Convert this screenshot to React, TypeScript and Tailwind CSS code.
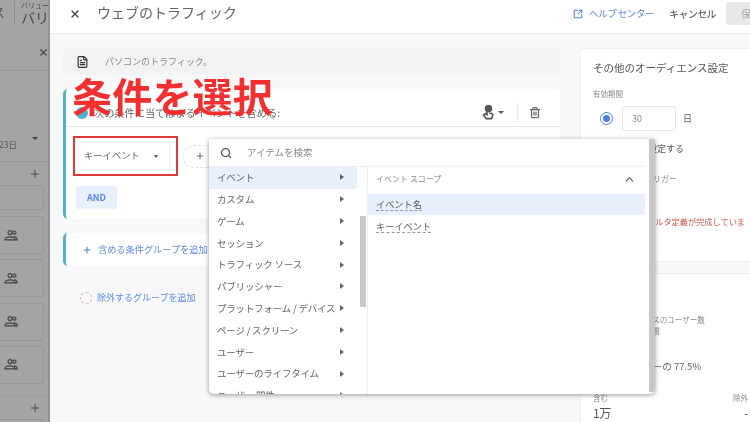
import React from 'react';
import { X, FileText, Plus, Search, SquareArrowOutUpRight, Trash2, ChevronUp } from 'lucide-react';

const cats = [
  'イベント',
  'カスタム',
  'ゲーム',
  'セッション',
  'トラフィック ソース',
  'パブリッシャー',
  'プラットフォーム / デバイス',
  'ページ / スクリーン',
  'ユーザー',
  'ユーザーのライフタイム',
  'ユーザー 関性',
];

const PeopleIcon = () => (
  <svg viewBox="0 0 14 11" className="w-[14px] h-[11px]" fill="none" stroke="#444" strokeWidth="1.2">
    <circle cx="6" cy="2.6" r="2" />
    <circle cx="10.4" cy="2.6" r="1.6" />
    <path d="M1 9.8c0-2 2.4-3 5-3s5 1 5 3z" />
    <path d="M10 6.8c1.6 0 3.2.8 3.2 3H11" />
  </svg>
);

const HandIcon = () => (
  <svg viewBox="0 0 12 15" className="w-[12px] h-[15px]" fill="none" stroke="#555" strokeWidth="1.6">
    <circle cx="6.5" cy="3.6" r="3" fill="#555" />
    <path d="M5 5.5v4.3L3.2 8.6 1.6 10l2.6 3.6h5.4l1.2-3.4c.2-.8-.2-1.4-1-1.6L7.4 8" />
  </svg>
);

const Sidebar = () => (
  <div className="w-[50px] shrink-0 h-full bg-[#a4a4a4] flex flex-col text-[#4a4a4a] overflow-hidden border-r-2 border-[#939393]">
    <div className="h-[35px] shrink-0 flex items-start pt-[1px] overflow-hidden whitespace-nowrap">
      <span className="ml-[-8px] w-[12px] text-[13px] leading-[22px] text-[#555]">ス</span>
      <div className="ml-[10px] border-l border-[#8d8d8d] pl-[6px] h-[24px]">
        <div className="text-[7px] leading-[9px]">バリュー</div>
        <div className="text-[14px] leading-[15px]">バリ</div>
      </div>
    </div>
    <div className="h-[36px] shrink-0 border-b border-[#979797] flex justify-end items-center">
      <X className="w-[11px] h-[11px] translate-x-[1px]" strokeWidth={2.5} />
    </div>
    <div className="h-[91px] shrink-0 border-b border-[#979797] flex items-end pb-[13px] text-[8.5px] leading-none text-[#555]">
      <span className="ml-[-1px]">23日</span>
      <span className="ml-[15px] mb-[8px] w-0 h-0 border-x-[3px] border-x-transparent border-t-[3px] border-t-[#444]" />
    </div>
    <div className="h-[23px] shrink-0 flex justify-end items-center pr-[7px]">
      <Plus className="w-[12px] h-[12px]" />
    </div>
    <div className="h-[25px] shrink-0 border border-[#979797] rounded-r-[3px] mr-[4px] ml-[-4px] mb-[6px]" />
    {[0, 1, 2, 3].map((i) => (
      <div key={i} className="h-[38px] shrink-0 border border-[#979797] rounded-r-[3px] mr-[4px] ml-[-4px] mb-[5.3px] flex items-center pl-[7px]">
        <PeopleIcon />
      </div>
    ))}
    <div className="mt-[7px] border-t border-[#9c9c9c] h-[23px] shrink-0 flex justify-end items-center pr-[7px]">
      <Plus className="w-[12px] h-[12px]" />
    </div>
    <div className="h-[10px] shrink-0 border border-[#979797] rounded-r-[3px] mr-[4px] ml-[-4px]" />
  </div>
);

const Header = () => (
  <div className="h-[34px] shrink-0 bg-white border-b border-[#e8eaed] flex items-center pl-[19px] pb-[6px] text-[#3c4043]">
    <X className="w-[12px] h-[12px]" strokeWidth={2.5} />
    <span className="ml-[16px] mb-[3px] text-[14px] leading-none text-[#5f6368]">ウェブのトラフィック</span>
    <div className="ml-auto flex items-center">
      <SquareArrowOutUpRight className="w-[10px] h-[10px] text-[#4d7fe0]" strokeWidth={2.5} />
      <span className="ml-[6px] text-[9.6px] tracking-[-0.55px] text-[#5b88e6]">ヘルプ センター</span>
      <span className="ml-[15px] text-[10px] tracking-[-0.6px] text-[#444]">キャンセル</span>
      <div className="ml-[10px] w-[24px] h-[23px] bg-[#e8e8e8] rounded-l-[3px] pl-[15px] text-[10px] leading-[23px] text-[#aaa] overflow-hidden whitespace-nowrap">保存</div>
    </div>
  </div>
);

const LeftPane = () => (
  <div className="w-[497px] shrink-0 flex flex-col">
    <div className="h-[27px] bg-[#f1f3f4] rounded-[5px] flex items-center pl-[13px]">
      <FileText className="w-[13px] h-[14px] text-[#333]" strokeWidth={2.2} />
      <span className="ml-[16px] text-[9px] text-[#888]">パソコンのトラフィック。</span>
    </div>
    <div className="mt-[14px] h-[130px] bg-white rounded-[5px] border-l-[3px] border-[#4fb3c9] flex flex-col">
      <div className="h-[38px] shrink-0 border-b border-[#e8eaed] flex items-center pt-[10px] pl-[10px]">
        <span className="w-[12px] h-[12px] rounded-full bg-[#4fb3c9]" />
        <span className="ml-[6px] text-[10.2px] text-[#666] whitespace-nowrap">次の条件に当てはまるイベントを含める:</span>
        <div className="ml-auto flex items-center pr-[19px] text-[#555]">
          <HandIcon />
          <span className="ml-[4px] w-0 h-0 border-x-[3px] border-x-transparent border-t-[3px] border-t-[#555]" />
          <span className="ml-[13px] mr-[11px] w-px h-[19px] bg-[#e8eaed]" />
          <Trash2 className="w-[12px] h-[13px] text-[#666]" strokeWidth={2.5} />
        </div>
      </div>
      <div className="flex items-center mt-[9px] ml-[7px]">
        <div className="w-[105px] h-[40px] border-2 border-[#e53935] flex items-center pl-[9px] text-[9.3px] text-[#666]">
          <span>キーイベント</span>
          <span className="ml-[14px] w-0 h-0 border-x-[2.5px] border-x-transparent border-t-[3px] border-t-[#555]" />
          <span className="ml-[11px] w-px h-[26px] bg-[#e8eaed]" />
        </div>
        <div className="ml-[5px] w-[40px] h-[23px] border border-dashed border-[#dfe1e5] rounded-[10px] pl-[11px] flex items-center text-[#555]">
          <Plus className="w-[10px] h-[10px]" />
        </div>
      </div>
      <div className="mt-[10px] ml-[10px] w-[41px] h-[23px] rounded-[3px] bg-[#e8f0fe] text-[9px] font-bold text-[#5b88e6] flex items-center justify-center">AND</div>
    </div>
    <div className="mt-[14px] h-[33px] bg-white rounded-[5px] border-l-[3px] border-[#4fb3c9] flex items-center pl-[16px]">
      <Plus className="w-[10px] h-[10px] text-[#4d7fe0]" strokeWidth={2.5} />
      <span className="ml-[6px] text-[9.2px] text-[#5b88e6] whitespace-nowrap">含める条件グループを追加</span>
    </div>
    <div className="mt-[25px] flex items-center pl-[17px]">
      <span className="w-[12px] h-[12px] rounded-full border border-dashed border-[#f0b183]" />
      <span className="ml-[5px] text-[9px] text-[#5b88e6] whitespace-nowrap">除外するグループを追加</span>
    </div>
  </div>
);

const RightPane = () => (
  <div className="ml-[20px] flex-1 flex flex-col min-w-0">
    <div className="h-[213px] bg-white rounded-tl-[4px] border-l border-t border-[#eceef1] pl-[12px] pt-[11px] whitespace-nowrap overflow-hidden">
      <div className="text-[10.5px] leading-[16px] text-[#555]">その他のオーディエンス設定</div>
      <div className="mt-[13px] text-[7.5px] leading-[10px] text-[#888]">有効期間</div>
      <div className="mt-[7px] flex items-center">
        <span className="ml-[7px] w-[13px] h-[13px] rounded-full border border-[#4d7fe0] flex items-center justify-center">
          <span className="w-[7px] h-[7px] rounded-full bg-[#4d7fe0]" />
        </span>
        <div className="ml-[9px] w-[54px] h-[25px] border border-[#e3e5e8] rounded-[3px] pl-[9px] text-[9px] leading-[23px] text-[#888]">30</div>
        <span className="ml-[7px] text-[9px] text-[#555]">日</span>
      </div>
      <div className="mt-[11px] ml-[46px] text-[9px] leading-[14px] text-[#555]">を設定する</div>
      <div className="mt-[18px] ml-[52px] text-[8px] leading-[10px] text-[#888]">トリガー</div>
      <div className="mt-[30px] ml-[46px] text-[8.2px] leading-[14px] text-[#d0544c]">フィルタ定義が完成していま</div>
    </div>
    <div className="h-[13px] shrink-0 bg-[#f7f8fa] border-y border-[#eceef1]" />
    <div className="flex-1 bg-white border-l border-[#eceef1] pl-[12px] whitespace-nowrap overflow-hidden">
      <div className="mt-[40px] ml-[15px] text-[7.5px] leading-[12px] text-[#888]">オーディエンスのユーザー数</div>
      <div className="ml-[25px] text-[7.5px] leading-[10px] text-[#888]">過去 30 日間</div>
      <div className="mt-[23px] ml-[22px] text-[9.5px] leading-[14px] text-[#666]">全ユーザーの 77.5%</div>
      <div className="mt-[20px] pr-[2px] flex justify-between text-[7.5px] leading-[10px] text-[#888]">
        <span>含む</span>
        <span>除外</span>
      </div>
      <div className="pr-[2px] flex justify-between text-[12px] tracking-[-0.5px] leading-[19px] text-[#555]">
        <span>1万</span>
        <span>-</span>
      </div>
    </div>
  </div>
);

const ConditionMenu = () => (
  <div className="absolute left-[209px] top-[139px] w-[446px] h-[255px] bg-white rounded-b-[5px] shadow-[0_1px_5px_rgba(0,0,0,0.4)] flex overflow-hidden">
    <div className="flex-1 mr-[4px] flex flex-col min-w-0">
      <div className="h-[28px] shrink-0 border-b border-[#eceef1] flex items-center pl-[11px]">
        <Search className="w-[12px] h-[12px] text-[#555]" strokeWidth={2.5} />
        <span className="ml-[15px] text-[9.5px] text-[#888]">アイテムを検索</span>
      </div>
      <div className="flex-1 flex min-h-0">
        <div className="w-[148px] shrink-0 overflow-hidden">
          {cats.map((c, i) => (
            <div key={c} className={'h-[21.8px] pl-[8px] pr-[13px] pb-[1px] flex items-center justify-between text-[9.5px] tracking-[-0.2px] text-[#666] whitespace-nowrap ' + (i === 0 ? 'bg-[#e8f0fe]' : '')}>
              <span>{c}</span>
              <span className="w-0 h-0 border-y-[3px] border-y-transparent border-l-[4px] border-l-[#666]" />
            </div>
          ))}
        </div>
        <div className="w-[11px] shrink-0 border-r border-[#eceef1] pt-[49px] pl-[3px]">
          <div className="w-[6px] h-[91px] bg-[#c8c8c8]" />
        </div>
        <div className="flex-1">
          <div className="h-[24px] pl-[8px] pr-[9px] flex items-center justify-between text-[8px] text-[#888]">
            <span>イベント スコープ</span>
            <ChevronUp className="w-[13px] h-[13px] text-[#666]" strokeWidth={2.5} />
          </div>
          <div className="mt-[3px] h-[21px] bg-[#e8f0fe] pl-[8px] flex items-center text-[9.2px] text-[#555]">
            <span className="border-b border-dashed border-[#999] leading-[12px]">イベント名</span>
          </div>
          <div className="h-[21px] mt-[1px] pl-[8px] flex items-center text-[9.2px] text-[#555]">
            <span className="border-b border-dashed border-[#999] leading-[12px]">キーイベント</span>
          </div>
        </div>
      </div>
    </div>
    <div className="w-[6px] shrink-0 bg-[#c8c8c8] mb-[2px]" />
  </div>
);

export default function App() {
  return (
    <div className="w-[750px] h-[422px] overflow-hidden">
      <div className="relative w-[750px] h-[422px] flex bg-[#f7f8fa] blur-[0.5px] font-['Noto_Sans_CJK_JP','Noto_Sans',sans-serif]">
        <Sidebar />
        <div className="flex-1 flex flex-col min-w-0">
          <Header />
          <div className="flex-1 flex pl-[13px] pt-[14px] min-h-0">
            <LeftPane />
            <RightPane />
          </div>
        </div>
        <ConditionMenu />
        <div className="absolute left-[72px] top-[68px] text-[40px] leading-[54px] font-bold tracking-[0.2px] text-[#f42f2f] whitespace-nowrap">条件を選択</div>
      </div>
    </div>
  );
}
